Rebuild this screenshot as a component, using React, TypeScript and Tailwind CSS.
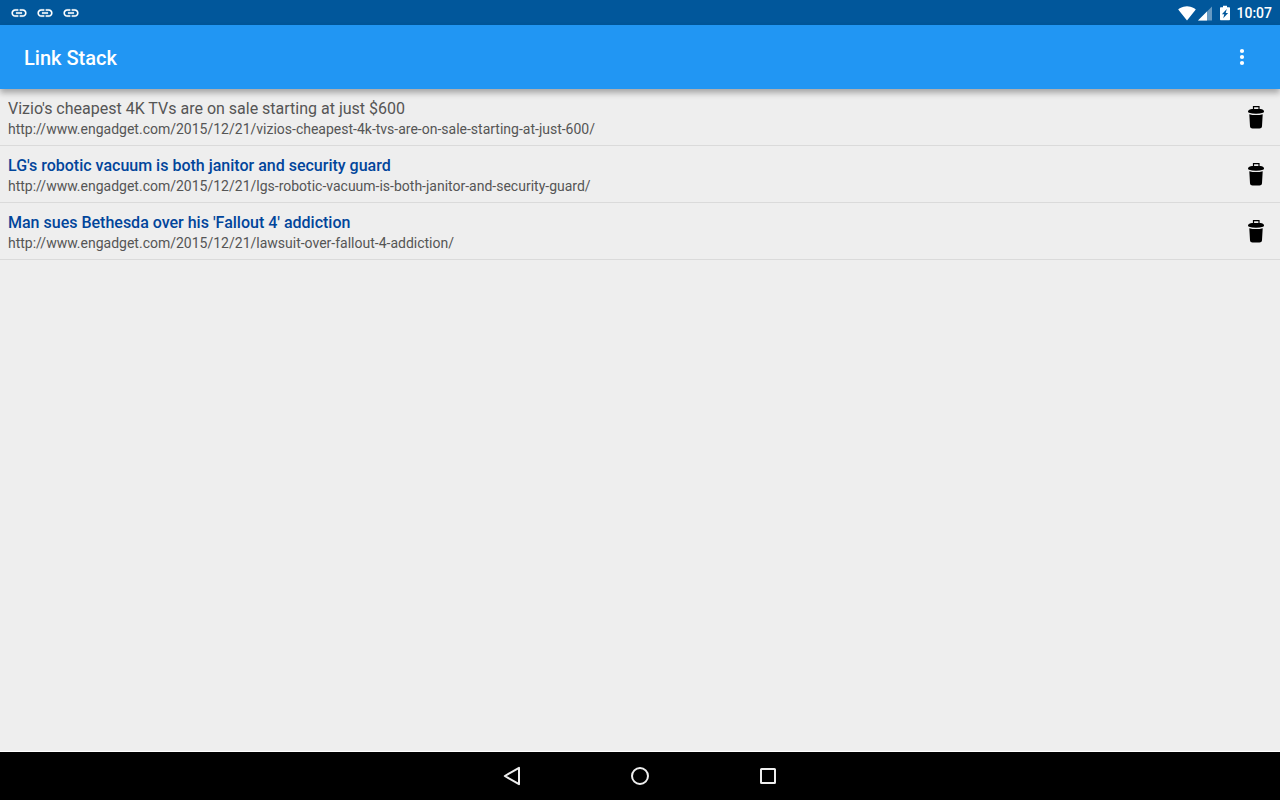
import React, { useState } from 'react';

interface LinkItem {
  title: string;
  url: string;
  read: boolean;
}

const initialLinks: LinkItem[] = [
  {
    title: "Vizio's cheapest 4K TVs are on sale starting at just $600",
    url: 'http://www.engadget.com/2015/12/21/vizios-cheapest-4k-tvs-are-on-sale-starting-at-just-600/',
    read: true,
  },
  {
    title: "LG's robotic vacuum is both janitor and security guard",
    url: 'http://www.engadget.com/2015/12/21/lgs-robotic-vacuum-is-both-janitor-and-security-guard/',
    read: false,
  },
  {
    title: "Man sues Bethesda over his 'Fallout 4' addiction",
    url: 'http://www.engadget.com/2015/12/21/lawsuit-over-fallout-4-addiction/',
    read: false,
  },
];

const LinkIcon = () => (
  <svg width="18" height="18" viewBox="0 0 24 24" fill="currentColor" stroke="currentColor" strokeWidth="0.3">
    <path d="M3.9 12c0-1.71 1.39-3.1 3.1-3.1h4V7H7c-2.76 0-5 2.24-5 5s2.24 5 5 5h4v-1.9H7c-1.71 0-3.1-1.39-3.1-3.1zM8 13h8v-2H8v2zm9-6h-4v1.9h4c1.71 0 3.1 1.39 3.1 3.1s-1.39 3.1-3.1 3.1h-4V17h4c2.76 0 5-2.24 5-5s-2.24-5-5-5z" />
  </svg>
);

const WifiIcon = () => (
  <svg width="18" height="16" viewBox="0 0 18 16" fill="currentColor">
    <path d="M9 15.5 17.8 4.4C17.4 4.1 14 1.2 9 1.2S.6 4.1.2 4.4L9 15.5z" />
  </svg>
);

const SignalIcon = () => (
  <svg width="14" height="16" viewBox="0 0 14 16" fill="currentColor">
    <path d="M0 15.5h14v-14z" fillOpacity="0.4" />
    <path d="M0 15.5h9v-9z" />
  </svg>
);

const BatteryIcon = () => (
  <svg width="10" height="16" viewBox="0 0 10 16">
    <path
      fill="currentColor"
      d="M9 2.2H7V.8H3v1.4H1c-.6 0-1 .4-1 1v11c0 .6.4 1 1 1h8c.6 0 1-.4 1-1v-11c0-.6-.4-1-1-1z"
    />
    <path fill="#01579b" d="M6.8 4 1.9 9.3h2.4L3.2 13.2 8.1 8H5.7z" />
  </svg>
);

const TrashIcon = () => (
  <svg width="24" height="24" viewBox="0 0 24 24">
    <path d="M9.500 5V1.600h5.500V5" fill="none" stroke="currentColor" strokeWidth="1.200" />
    <path
      fill="currentColor"
      d="M8 4h8.500c1.800 0 3.500 1.200 3.500 2.600 0 .7-.4 1-1 1.200C17 8.400 14.600 8.700 12 8.700s-5-.3-7-.9c-.6-.2-1-.5-1-1.200C4 5.200 6.200 4 8 4z"
    />
    <path
      fill="currentColor"
      d="M5.300 9.200c2 .6 4.200.9 6.700.9s4.700-.3 6.700-.9L18 21.300c-.1 1.400-1.200 2.200-2.500 2.200h-7c-1.300 0-2.400-.8-2.500-2.200L5.300 9.200z"
    />
  </svg>
);

const StatusBar = () => (
  <div className="h-[25px] shrink-0 bg-[#01579b] text-white flex items-center justify-between pl-2.5 pr-2">
    <div className="flex items-center gap-2">
      <LinkIcon />
      <LinkIcon />
      <LinkIcon />
    </div>
    <div className="flex items-center">
      <WifiIcon />
      <span className="ml-0.5"><SignalIcon /></span>
      <span className="ml-2"><BatteryIcon /></span>
      <span className="ml-1.5 text-sm leading-5 font-medium">10:07</span>
    </div>
  </div>
);

const AppBar = () => (
  <header className="h-16 shrink-0 bg-[#2196f3] text-white flex items-center justify-between pl-6 pr-[18px] shadow-[0_4px_6px_rgba(0,0,0,0.3)]">
    <h1 className="pt-0.5 text-xl font-medium">Link Stack</h1>
    <button type="button" aria-label="More options" className="w-10 h-10 flex items-center justify-center">
      <svg width="24" height="24" viewBox="0 0 24 24" fill="currentColor">
        <circle cx="12" cy="6" r="2.1" />
        <circle cx="12" cy="12" r="2.1" />
        <circle cx="12" cy="18" r="2.1" />
      </svg>
    </button>
  </header>
);

const LinkRow = ({ link, onDelete }: { link: LinkItem; onDelete: () => void }) => (
  <li className="flex items-center justify-between py-2 pl-2 pr-3 border-b border-[#dadada]">
    <a href={link.url} className="block min-w-0 flex-1">
      <span
        className={`block truncate text-base leading-6 ${
          link.read ? 'text-[#555555]' : 'font-medium text-[#01459b]'
        }`}
      >
        {link.title}
      </span>
      <span className="block truncate text-sm leading-4 text-[#555555]">{link.url}</span>
    </a>
    <button type="button" aria-label={`Delete ${link.title}`} onClick={onDelete} className="shrink-0 text-black">
      <TrashIcon />
    </button>
  </li>
);

const NavBar = () => (
  <nav className="h-12 shrink-0 bg-black text-[#eeeeee] flex items-center justify-center gap-[104px]">
    <button type="button" aria-label="Back">
      <svg width="24" height="24" viewBox="0 0 24 24" fill="none" stroke="currentColor" strokeWidth="2">
        <path d="M19 3.8v16.4L4.8 12z" strokeLinejoin="round" />
      </svg>
    </button>
    <button type="button" aria-label="Home">
      <svg width="24" height="24" viewBox="0 0 24 24" fill="none" stroke="currentColor" strokeWidth="2">
        <circle cx="12" cy="12" r="8" />
      </svg>
    </button>
    <button type="button" aria-label="Recent apps">
      <svg width="24" height="24" viewBox="0 0 24 24" fill="none" stroke="currentColor" strokeWidth="2">
        <rect x="5" y="5" width="14" height="14" rx="0.5" />
      </svg>
    </button>
  </nav>
);

export default function App() {
  const [links, setLinks] = useState<LinkItem[]>(initialLinks);

  const handleDelete = (url: string) => {
    setLinks(prev => prev.filter(l => l.url !== url));
  };

  return (
    <div className="min-h-screen flex flex-col bg-[#eeeeee] font-[Roboto,sans-serif]">
      <StatusBar />
      <AppBar />
      <main className="flex-1 border-b border-white">
        <ul>
          {links.map(link => (
            <LinkRow key={link.url} link={link} onDelete={() => handleDelete(link.url)} />
          ))}
        </ul>
      </main>
      <NavBar />
    </div>
  );
}
